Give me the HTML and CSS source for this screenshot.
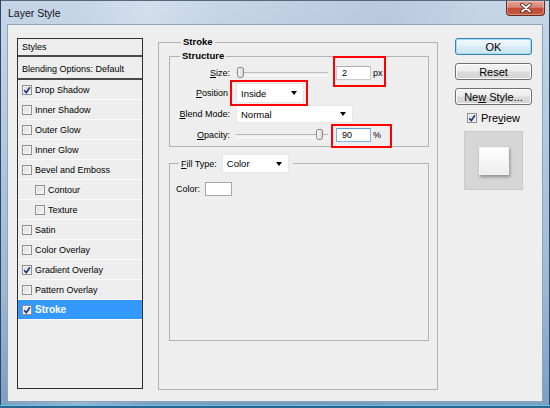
FILE: index.html
```html
<!DOCTYPE html>
<html>
<head>
<meta charset="utf-8">
<title>Layer Style</title>
<link rel="stylesheet" href="styles.css">
</head>
<body>
<div class="window">
  <div class="titlebar">
    <span class="title">Layer Style</span>
    <span class="close">
      <svg width="12" height="10" viewBox="0 0 12 10"><path d="M2 1.5L10 8.5M10 1.5L2 8.5" stroke="#4a2a24" stroke-width="3.6" stroke-linecap="round"/><path d="M2 1.5L10 8.5M10 1.5L2 8.5" stroke="#fff" stroke-width="1.8" stroke-linecap="round"/></svg>
    </span>
  </div>
  <div class="client">
    <div class="styles">
      <div class="sp-head">Styles</div>
      <div class="sp-blend">Blending Options: Default</div>
      <div class="sp-row"><span class="cb on"><svg viewBox="0 0 8 8"><path d="M1.2 4.2L3.3 6.6L6.9 1.2"/></svg></span>Drop Shadow</div>
      <div class="sp-row"><span class="cb"></span>Inner Shadow</div>
      <div class="sp-row"><span class="cb"></span>Outer Glow</div>
      <div class="sp-row"><span class="cb"></span>Inner Glow</div>
      <div class="sp-row"><span class="cb"></span>Bevel and Emboss</div>
      <div class="sp-row sub"><span class="cb"></span>Contour</div>
      <div class="sp-row sub"><span class="cb"></span>Texture</div>
      <div class="sp-row"><span class="cb"></span>Satin</div>
      <div class="sp-row"><span class="cb"></span>Color Overlay</div>
      <div class="sp-row"><span class="cb on"><svg viewBox="0 0 8 8"><path d="M1.2 4.2L3.3 6.6L6.9 1.2"/></svg></span>Gradient Overlay</div>
      <div class="sp-row"><span class="cb"></span>Pattern Overlay</div>
      <div class="sp-row selected"><span class="cb on"><svg viewBox="0 0 8 8"><path d="M1.2 4.2L3.3 6.6L6.9 1.2"/></svg></span>Stroke</div>
    </div>

    <fieldset class="group main">
      <legend class="lg-main">Stroke</legend>
      <fieldset class="group structure">
        <legend class="lg-sub">Structure</legend>
        <div class="form">
          <label class="lbl"><u>S</u>ize:</label>
          <div class="ctl">
            <div class="track"><span class="thumb" style="left:1px"></span></div>
            <span class="valbox mark mark-size"><span class="field">2</span><span class="unit">px</span></span>
          </div>

          <label class="lbl pos"><u>P</u>osition</label>
          <div class="ctl">
            <span class="mark mark-pos"><span class="select sel-pos">Inside</span></span>
          </div>

          <label class="lbl"><u>B</u>lend Mode:</label>
          <div class="ctl">
            <span class="select sel-blend">Normal</span>
          </div>

          <label class="lbl"><u>O</u>pacity:</label>
          <div class="ctl">
            <div class="track"><span class="thumb" style="left:80px"></span></div>
            <span class="valbox mark mark-op"><span class="field focus">90</span><span class="unit">%</span></span>
          </div>
        </div>
      </fieldset>

      <fieldset class="group fill">
        <legend class="lg-fill"><span class="fill-lbl"><u>F</u>ill Type:</span><span class="select sel-fill">Color</span></legend>
        <div class="color-row"><span>Color:</span><span class="swatch"></span></div>
      </fieldset>
    </fieldset>

    <div class="buttons">
      <div class="btn default"><span>OK</span></div>
      <div class="btn"><span>Reset</span></div>
      <div class="btn"><span>Ne<u>w</u> Style...</span></div>
      <div class="preview-row"><span class="cb on"><svg viewBox="0 0 8 8"><path d="M1.2 4.2L3.3 6.6L6.9 1.2"/></svg></span><span>Pre<u>v</u>iew</span></div>
      <div class="preview-box"><div class="preview-square"></div></div>
    </div>
  </div>
</div>
</body>
</html>
```

FILE: styles.css
```css
* { box-sizing: border-box; }
html, body { margin: 0; padding: 0; }
body {
  width: 550px;
  height: 408px;
  overflow: hidden;
  font-family: "Liberation Sans", Arial, sans-serif;
  font-size: 9px;
  color: #000;
  background: #6f8fb3;
}
u { text-decoration: underline; text-underline-offset: 1px; }

.window {
  width: 550px;
  height: 408px;
  display: flex;
  flex-direction: column;
  background:
    linear-gradient(100deg, rgba(255,255,255,0) 12%, rgba(255,255,255,.22) 24%, rgba(255,255,255,0) 36%, rgba(70,100,140,.10) 62%, rgba(255,255,255,0) 78%),
    linear-gradient(to bottom, #c6d6e8 0%, #b6cadf 30%, #9fb8d2 70%, #7c9ec3 100%);
  box-shadow:
    inset 0 -2px 0 #2d6590,
    inset 0 -3px 0 #5cc8e8,
    inset 1px 0 0 #2b4a6e,
    inset -1px 0 0 #2b4a6e,
    inset 0 1px 0 #55687e;
}

.titlebar {
  height: 24px;
  display: flex;
  align-items: flex-start;
}
.title {
  padding: 6px 0 0 8px;
  font-size: 10.5px;
  line-height: 14px;
  color: #111;
}
.close {
  margin-left: auto;
  margin-right: 5px;
  margin-top: 1px;
  width: 39px;
  height: 15px;
  border: 1px solid #6b2b22;
  border-top: none;
  border-radius: 0 0 4px 4px;
  background: linear-gradient(to bottom, #e6a595 0%, #d88574 45%, #c44b35 52%, #c65a41 100%);
  box-shadow: inset 0 0 0 1px rgba(255,255,255,.3);
  display: flex;
  align-items: center;
  justify-content: center;
}

.client {
  flex: 1;
  margin: 0 7px 6px 7px;
  background: #eeeeee;
  border: 1px solid #8fa3b9;
  display: flex;
  align-items: flex-start;
  padding: 11px 0 0 9px;
}

/* left styles list */
.styles {
  width: 126px;
  height: 351px;
  margin-top: 2px;
  border: 1px solid #2f2f2f;
  background: #eeeeee;
}
.sp-head {
  height: 18px;
  line-height: 16px;
  padding-left: 4px;
  border-bottom: 2px solid #4a4a4a;
}
.sp-blend {
  height: 23px;
  line-height: 17px;
  padding: 4px 0 0 4px;
  border-bottom: 2px solid #4a4a4a;
}
.sp-row {
  height: 20px;
  display: flex;
  align-items: center;
  gap: 3px;
  padding-left: 4px;
  border-bottom: 1px solid #fbfbfb;
}
.sp-row.sub { padding-left: 17px; }
.sp-row.selected {
  background: #3399ff;
  color: #fff;
  font-weight: bold;
  font-size: 10px;
}

.cb {
  width: 10px;
  height: 10px;
  flex: none;
  border: 1px solid #8e8f8f;
  background: linear-gradient(135deg, #dcdcdc 0%, #f6f6f6 100%);
  box-shadow: inset 0 0 0 1px #f4f4f4;
  display: flex;
  align-items: center;
  justify-content: center;
}
.cb svg { width: 8px; height: 8px; }
.cb svg path { fill: none; stroke: #22378a; stroke-width: 1.7; }

/* groups */
.group {
  margin: 0;
  padding: 0;
  border: 1px solid #b3b3b3;
  min-inline-size: 0;
}
.group legend {
  background: #eeeeee;
  line-height: 12px;
}
.main {
  width: 280px;
  height: 354px;
  margin-left: 15px;
  padding: 2px 8px 0 10px;
}
.lg-main {
  margin-left: 12px;
  padding: 0 2px;
  font-weight: bold;
  font-size: 9.5px;
}
.structure {
  padding: 1px 0 1px 0;
}
.lg-sub {
  margin-left: 10px;
  padding: 0 2px;
  font-weight: bold;
  font-size: 9.5px;
}
.form {
  display: grid;
  grid-template-columns: 60px 1fr;
  grid-template-rows: 20px 20px 22px 20px;
  column-gap: 6px;
  align-items: center;
}
.lbl { text-align: right; white-space: nowrap; }
.lbl.pos { padding-right: 2px; }
.ctl { display: flex; align-items: center; }

.track {
  width: 92px;
  height: 12px;
  position: relative;
}
.track::before {
  content: "";
  position: absolute;
  left: 0;
  right: 0;
  top: 5px;
  height: 2px;
  border-top: 1px solid #b9b9b9;
  border-bottom: 1px solid #ffffff;
}
.thumb {
  position: absolute;
  top: 0;
  width: 7px;
  height: 11px;
  border: 1px solid #8a8a8a;
  border-radius: 2px 2px 3px 3px;
  background: linear-gradient(to right, #f8f8f8, #dadada);
}

.valbox {
  display: flex;
  align-items: center;
  gap: 2px;
  width: 48px;
  height: 14px;
  margin-left: 8px;
}
.field {
  width: 35px;
  height: 14px;
  flex: none;
  background: #fff;
  border: 1px solid #c8cbd2;
  border-top-color: #abadb3;
  padding-left: 5px;
  line-height: 12px;
}
.field.focus {
  border-color: #7eb4ea;
  border-top-color: #569de5;
}

.mark { position: relative; display: inline-flex; }
.mark::after {
  content: "";
  position: absolute;
  border: 2px solid #ff0000;
}
.mark-size::after { top: -10px; bottom: -7px; left: -3px; right: -2px; }
.mark-op::after { top: -4px; bottom: -6px; left: -5px; right: -8px; }
.mark-pos::after { top: -3px; bottom: -3px; left: -6px; right: -4px; }

.select {
  display: flex;
  align-items: center;
  justify-content: space-between;
  background: #fff;
  border: 1px solid #e6e6e6;
  padding: 0 6px 0 4px;
}
.select::after {
  content: "";
  border-left: 3px solid transparent;
  border-right: 3px solid transparent;
  border-top: 4px solid #000;
}
.sel-pos { width: 68px; height: 20px; font-size: 9.5px; }
.sel-blend { width: 117px; height: 18px; font-size: 9.5px; }
.sel-fill { width: 67px; height: 19px; font-size: 9.5px; margin-left: 5px; }

.fill {
  height: 187px;
  margin-top: 7px;
  padding: 9px 0 0 0;
}
.lg-fill {
  margin-left: 9px;
  padding: 0 4px 0 2px;
  line-height: 20px;
}
.fill-lbl, .sel-fill { vertical-align: middle; }
.sel-fill { display: inline-flex; }
.color-row {
  display: flex;
  align-items: center;
  gap: 5px;
  height: 14px;
  margin-left: 6px;
}
.swatch {
  width: 27px;
  height: 14px;
  background: #fff;
  border: 1px solid #a8a8a8;
}

/* right column */
.buttons {
  width: 77px;
  margin: 2px 0 0 17px;
  display: flex;
  flex-direction: column;
  align-items: center;
}
.btn {
  width: 77px;
  height: 17px;
  margin-bottom: 8px;
  border: 1px solid #707070;
  border-radius: 3px;
  background: linear-gradient(to bottom, #f4f4f4 0%, #ececec 48%, #dcdcdc 52%, #d2d2d2 100%);
  box-shadow: inset 0 0 0 1px rgba(255,255,255,.85);
  font-size: 11px;
  display: flex;
  align-items: center;
  justify-content: center;
}
.btn.default {
  border-color: #3c7fb1;
  background: linear-gradient(to bottom, #f2f9fd 0%, #e6f2f9 48%, #d6eaf5 52%, #cde4f1 100%);
  box-shadow: inset 0 0 0 1px #9fe0f8;
}
.preview-row {
  height: 15px;
  margin-top: -3px;
  display: flex;
  align-items: center;
  gap: 4px;
  font-size: 11px;
}
.preview-box {
  width: 59px;
  height: 59px;
  margin-top: 6px;
  background: #d6d6d6;
  border: 1px solid #cacaca;
  display: flex;
  align-items: center;
  justify-content: center;
}
.preview-square {
  width: 30px;
  height: 28px;
  background: linear-gradient(to bottom, #ffffff, #ececec);
  border: 1px solid #f4f4f4;
  box-shadow: 1px 2px 3px rgba(0,0,0,.35);
}
```
